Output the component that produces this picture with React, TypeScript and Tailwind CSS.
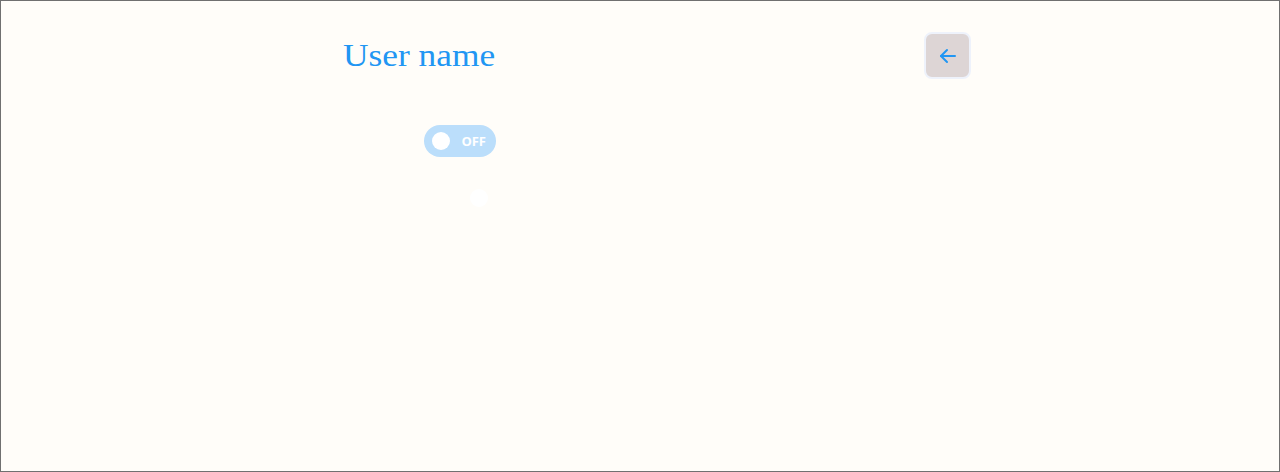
import { useState } from 'react';

function BackArrow() {
    return (
        <svg width="20" height="20" viewBox="0 0 20 20" fill="none" stroke="#2196f3" strokeWidth="2" strokeLinecap="round" strokeLinejoin="round">
            <path d="M17 10H3" />
            <path d="M9 4l-6 6 6 6" />
        </svg>
    );
}

export default function App() {
    const [on, setOn] = useState(false);

    return (
        <div className="h-[472px] w-full border border-[#707070] bg-[#fffdf9]">
            <div className="ml-[342px] w-[628px] pt-[30px]">
                <div className="flex items-start justify-between">
                    <div className="flex w-[154px] flex-col items-end">
                        <h1 className="mt-[5px] w-full origin-left scale-x-[1.14] whitespace-nowrap text-[31px] leading-[40px] text-[#2196f3] font-['Liberation_Serif',serif]">
                            User name
                        </h1>
                        <button
                            onClick={() => setOn(!on)}
                            className="mt-[49px] mr-[1px] flex h-[32px] w-[72px] items-center rounded-full bg-[#bbdefb] pl-[8px] pr-[10px]"
                        >
                            <span className="h-[18px] w-[18px] rounded-full bg-white" />
                            <span className="mt-[1px] ml-auto text-[13px] font-bold text-white font-['Open_Sans',sans-serif]">
                                {on ? 'ON' : 'OFF'}
                            </span>
                        </button>
                        <div className="mt-[32px] mr-[9px] h-[18px] w-[18px] rounded-full bg-white" />
                    </div>
                    <button className="mt-[1px] flex h-[47px] w-[47px] items-center justify-center rounded-lg border-2 border-[#eef2fb] bg-[#ddd5d5]">
                        <BackArrow />
                    </button>
                </div>
            </div>
        </div>
    );
}
